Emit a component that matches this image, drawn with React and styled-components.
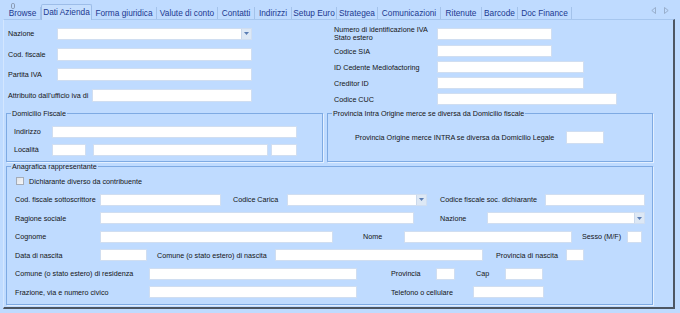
import React from 'react'
import styled, { createGlobalStyle } from 'styled-components'

const GlobalStyle = createGlobalStyle`
  body {
    margin: 0;
    background: #bfdbff;
    font-family: "Liberation Sans", Arial, sans-serif;
  }
`

const Window = styled.div`
  width: 680px;
  height: 313px;
  overflow: hidden;
  background: #bfdbff;
  display: flex;
  flex-direction: column;
`

const TabStrip = styled.div`
  display: flex;
  align-items: flex-end;
  height: 19px;
  padding-left: 5px;
  position: relative;
  z-index: 1;
`

const Tab = styled.div`
  position: relative;
  flex: none;
  box-sizing: border-box;
  width: ${p => p.$w}px;
  height: ${p => (p.$active ? 16 : 12)}px;
  margin-bottom: ${p => (p.$active ? -1 : 0)}px;
  display: flex;
  align-items: ${p => (p.$active ? 'flex-start' : 'center')};
  padding-top: ${p => (p.$active ? 2 : 0)}px;
  justify-content: center;
  font-size: 8.3px;
  color: #1b3990;
  white-space: nowrap;
  background: ${p => (p.$active ? '#c6dffe' : 'transparent')};
  border: ${p => (p.$active ? '1px solid #9dbde8' : 'none')};
  border-bottom: none;
  border-right: ${p => (p.$active ? '1px solid #9dbde8' : '1px solid #a3c2ea')};
  border-radius: ${p => (p.$active ? '2px 2px 0 0' : '0')};
`

const TabIcon = styled.svg`
  position: absolute;
  left: 6px;
  top: -4px;
`

const Arrows = styled.div`
  margin-left: auto;
  display: flex;
  gap: 8px;
  padding: 0 11px 5px 0;
`

const Panel = styled.div`
  flex: 1;
  margin: 0 5px 4px 3px;
  border-top: 1px solid #a6c6ee;
  border-left: 1px solid #d3e6ff;
  border-right: 2px solid #4d5663;
  border-bottom: 2px solid #4d5663;
  padding-left: 2px;
  display: flex;
  flex-direction: column;
`

const TopSection = styled.div`
  display: flex;
  height: 89px;
  padding-left: 2px;
`

const Column = styled.div`
  display: flex;
  flex-direction: column;
  width: ${p => (p.$w ? `${p.$w}px` : 'auto')};
  padding-top: ${p => p.$pt}px;
  gap: ${p => p.$gap}px;
`

const Row = styled.div`
  display: flex;
  align-items: center;
  height: ${p => p.$h || 12}px;
  margin-left: ${p => p.$ml || 0}px;
`

const Label = styled.span`
  flex: none;
  box-sizing: border-box;
  width: ${p => (p.$w ? `${p.$w}px` : 'auto')};
  margin-left: ${p => p.$ml || 0}px;
  font-size: 7.2px;
  line-height: ${p => p.$lh || 9}px;
  color: #141414;
  white-space: ${p => (p.$wrap ? 'normal' : 'nowrap')};
`

const Field = styled.input`
  flex: none;
  box-sizing: border-box;
  width: ${p => p.$w}px;
  height: ${p => p.$h || 12}px;
  margin: 0;
  margin-left: ${p => p.$ml || 0}px;
  padding: 0 2px;
  border: 1px solid #d0def1;
  background: #fff;
  outline: none;
  font-size: 7px;
`

const SelectBox = styled.div`
  flex: none;
  box-sizing: border-box;
  display: flex;
  width: ${p => p.$w}px;
  height: 12px;
  border: 1px solid #d0def1;
  background: #fff;
`

const DropButton = styled.div`
  margin-left: auto;
  width: 9px;
  height: 100%;
  background: #dde8f5;
  border-left: 1px solid #cbd9ec;
  display: flex;
  align-items: center;
  justify-content: center;
`

const FieldRow = styled.div`
  display: flex;
  gap: 4px;
`

const Group = styled.fieldset`
  margin: 0;
  min-width: 0;
  box-sizing: border-box;
  width: ${p => p.$w}px;
  padding: ${p => p.$pad};
  border: 1px solid #7eaae3;
  box-shadow: 1px 1px 0 #e3efff;
  display: flex;
  flex-direction: column;
  justify-content: ${p => (p.$center ? 'center' : 'flex-start')};
  gap: ${p => p.$gap || 0}px;
`

const Legend = styled.legend`
  padding: 0 1px;
  font-size: 7.2px;
  line-height: 9px;
  color: #141414;
`

const Check = styled.span`
  flex: none;
  box-sizing: border-box;
  width: 8px;
  height: 8px;
  border: 1px solid #a4acb8;
  background: linear-gradient(135deg, #dfe3e8, #f5f6f8);
  margin-right: 5px;
`

const Select = ({ w }) => (
  <SelectBox $w={w}>
    <DropButton>
      <svg width="5" height="3" viewBox="0 0 5 3">
        <path d="M0 0h5L2.5 3z" fill="#5a7db4" />
      </svg>
    </DropButton>
  </SelectBox>
)

const tabs = [
  ['Browse', 36],
  ['Dati Azienda', 51],
  ['Forma giuridica', 65],
  ['Valute di conto', 61],
  ['Contatti', 37],
  ['Indirizzi', 37],
  ['Setup Euro', 45],
  ['Strategea', 41],
  ['Comunicazioni', 63],
  ['Ritenute', 41],
  ['Barcode', 36],
  ['Doc Finance', 54],
]

const App = () => {
  return (
    <Window>
      <GlobalStyle />
      <TabStrip>
        {tabs.map(([name, w], i) => (
          <Tab key={name} $w={w} $active={i === 1}>
            {i === 0 && (
              <TabIcon width="4" height="6" viewBox="0 0 4 6">
                <rect x="0.5" y="0.5" width="3" height="5" rx="1.2" fill="none" stroke="#7d8aa0" strokeWidth="0.8" />
              </TabIcon>
            )}
            {name}
          </Tab>
        ))}
        <Arrows>
          <svg width="5" height="7" viewBox="0 0 5 7">
            <path d="M4.5 0.5v6L0.8 3.5z" fill="none" stroke="#8fa3bf" strokeWidth="0.8" />
          </svg>
          <svg width="5" height="7" viewBox="0 0 5 7">
            <path d="M0.5 0.5v6L4.2 3.5z" fill="none" stroke="#8fa3bf" strokeWidth="0.8" />
          </svg>
        </Arrows>
      </TabStrip>

      <Panel>
        <TopSection>
          <Column $w={326} $pt={7} $gap={7.7}>
            <Row $h={13}>
              <Label $w={49}>Nazione</Label>
              <Select w={195} />
            </Row>
            <Row $h={13}>
              <Label $w={49}>Cod. fiscale</Label>
              <Field $w={195} $h={13} readOnly />
            </Row>
            <Row $h={13}>
              <Label $w={49}>Partita IVA</Label>
              <Field $w={195} $h={13} readOnly />
            </Row>
            <Row $h={13}>
              <Label $w={84}>Attribuito dall'ufficio iva di</Label>
              <Field $w={160} $h={13} readOnly />
            </Row>
          </Column>
          <Column $pt={6} $gap={4}>
            <Row $h={15}>
              <Label $w={103} $lh={7.6} $wrap>
                Numero di identificazione IVA
                <br />
                Stato estero
              </Label>
              <Field $w={115} readOnly />
            </Row>
            <Row>
              <Label $w={103}>Codice SIA</Label>
              <Field $w={115} readOnly />
            </Row>
            <Row>
              <Label $w={103}>ID Cedente Mediofactoring</Label>
              <Field $w={147} readOnly />
            </Row>
            <Row>
              <Label $w={103}>Creditor ID</Label>
              <Field $w={147} readOnly />
            </Row>
            <Row>
              <Label $w={103}>Codice CUC</Label>
              <Field $w={180} readOnly />
            </Row>
          </Column>
        </TopSection>

        <FieldRow>
          <Group $w={317} $pad="7.5px 4px 5px 4px" $gap={6}>
            <Legend>Domicilio Fiscale</Legend>
            <Row $ml={3}>
              <Label $w={38}>Indirizzo</Label>
              <Field $w={245} readOnly />
            </Row>
            <Row $ml={3}>
              <Label $w={38}>Località</Label>
              <Field $w={34} readOnly />
              <Field $w={175} $ml={7} readOnly />
              <Field $w={26} $ml={3} readOnly />
            </Row>
          </Group>
          <Group $w={326} $pad="0 4px 4px 4px" $center>
            <Legend>Provincia Intra Origine merce se diversa da Domicilio fiscale</Legend>
            <Row $ml={23} $h={13}>
              <Label $w={211}>Provincia Origine merce INTRA se diversa da Domicilio Legale</Label>
              <Field $w={38} $h={13} readOnly />
            </Row>
          </Group>
        </FieldRow>

        <Group $w={647} $pad="4.5px 4px 6px 4px" $gap={6.5}>
          <Legend>Anagrafica rappresentante</Legend>
          <Row $ml={5}>
            <Check />
            <Label>Dichiarante diverso da contribuente</Label>
          </Row>
          <Row $ml={4}>
            <Label $w={85}>Cod. fiscale sottoscrittore</Label>
            <Field $w={121} readOnly />
            <Label $ml={12} $w={54}>Codice Carica</Label>
            <Select w={140} />
            <Label $ml={13} $w={105}>Codice fiscale soc. dichiarante</Label>
            <Field $w={100} readOnly />
          </Row>
          <Row $ml={4}>
            <Label $w={85}>Ragione sociale</Label>
            <Field $w={314} readOnly />
            <Label $ml={26} $w={47}>Nazione</Label>
            <Select w={158} />
          </Row>
          <Row $ml={4}>
            <Label $w={85}>Cognome</Label>
            <Field $w={233} readOnly />
            <Label $ml={30} $w={41}>Nome</Label>
            <Field $w={168} readOnly />
            <Label $ml={10} $w={45}>Sesso (M/F)</Label>
            <Field $w={15} readOnly />
          </Row>
          <Row $ml={4}>
            <Label $w={85}>Data di nascita</Label>
            <Field $w={47} readOnly />
            <Label $ml={10} $w={118}>Comune (o stato estero) di nascita</Label>
            <Field $w={208} readOnly />
            <Label $ml={13} $w={70}>Provincia di nascita</Label>
            <Field $w={18} readOnly />
          </Row>
          <Row $ml={4}>
            <Label $w={134}>Comune (o stato estero) di residenza</Label>
            <Field $w={208} readOnly />
            <Label $ml={34} $w={45}>Provincia</Label>
            <Field $w={19} readOnly />
            <Label $ml={21} $w={29}>Cap</Label>
            <Field $w={38} readOnly />
          </Row>
          <Row $ml={4}>
            <Label $w={134}>Frazione, via e numero civico</Label>
            <Field $w={208} readOnly />
            <Label $ml={34} $w={82}>Telefono o cellulare</Label>
            <Field $w={71} readOnly />
          </Row>
        </Group>
      </Panel>
    </Window>
  )
}

export default App
